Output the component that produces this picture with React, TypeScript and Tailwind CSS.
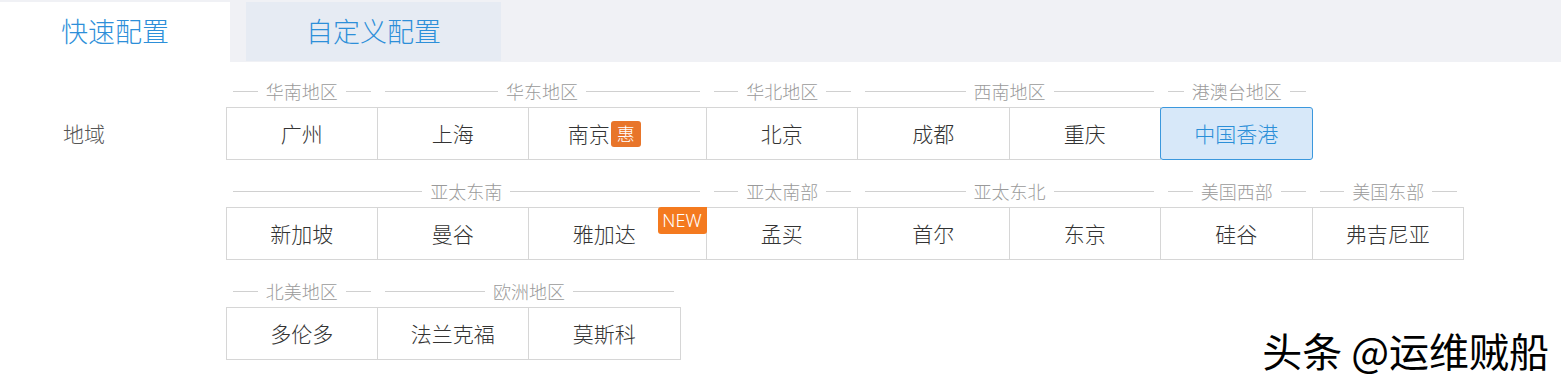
import React from "react";

type Btn = { name: string; w: number; badge?: "hui" | "new"; selected?: boolean };
type Group = { title: string; items: Btn[] };

const W = 151.5;

const rows: Group[][] = [
  [
    { title: "华南地区", items: [{ name: "广州", w: W - 1 }] },
    { title: "华东地区", items: [{ name: "上海", w: W }, { name: "南京", w: 177.5, badge: "hui" }] },
    { title: "华北地区", items: [{ name: "北京", w: W }] },
    { title: "西南地区", items: [{ name: "成都", w: W }, { name: "重庆", w: W }] },
    { title: "港澳台地区", items: [{ name: "中国香港", w: W, selected: true }] },
  ],
  [
    {
      title: "亚太东南",
      items: [
        { name: "新加坡", w: W - 1 },
        { name: "曼谷", w: W },
        { name: "雅加达", w: 177.5, badge: "new" },
      ],
    },
    { title: "亚太南部", items: [{ name: "孟买", w: W }] },
    { title: "亚太东北", items: [{ name: "首尔", w: W }, { name: "东京", w: W }] },
    { title: "美国西部", items: [{ name: "硅谷", w: W }] },
    { title: "美国东部", items: [{ name: "弗吉尼亚", w: W }] },
  ],
  [
    { title: "北美地区", items: [{ name: "多伦多", w: W - 1 }] },
    { title: "欧洲地区", items: [{ name: "法兰克福", w: W }, { name: "莫斯科", w: W }] },
  ],
];

const font = { fontFamily: '"Noto Sans CJK SC", "Noto Sans", sans-serif' };

function Button({ b, first }: { b: Btn; first: boolean }) {
  if (b.selected) {
    return (
      <div
        className="relative z-10 -ml-px flex h-[53px] items-center justify-center rounded-[3px] border border-[#3b98dd] bg-[#d7e8f9] text-[21px] font-light text-[#2b8fd8]"
        style={{ width: b.w + 1 }}
      >
        {b.name}
      </div>
    );
  }
  return (
    <div
      className={`relative flex h-[53px] items-center justify-center border-y border-r border-[#d6d6d6] text-[21px] font-light text-[#333] ${
        first ? "border-l" : ""
      } ${b.badge ? "pr-[26px]" : ""}`}
      style={{ width: b.w + (first ? 1 : 0) }}
    >
      <span className="flex items-center">
        {b.name}
        {b.badge === "hui" && (
          <span className="ml-[1px] flex h-[26px] w-[30px] items-center justify-center rounded-[3px] bg-[#e8752a] text-[18px] text-white">
            惠
          </span>
        )}
      </span>
      {b.badge === "new" && (
        <span
          className="absolute right-[-1px] top-[-1px] flex h-[27px] w-[49px] items-center justify-center rounded-b-[3px] rounded-tl-[3px] bg-[#f47a1f] text-[18px] text-white"
          style={{ fontFamily: '"Noto Sans", "Open Sans", sans-serif' }}
        >
          NEW
        </span>
      )}
    </div>
  );
}

function GroupView({ g, firstGroup }: { g: Group; firstGroup: boolean }) {
  return (
    <div className="flex flex-col">
      <div className="flex h-[32px] items-center gap-[8px] px-[7px]">
        <div className="h-px flex-1 bg-[#d0d0d0]" />
        <span className="text-[18px] font-light text-[#9a9a9a]">{g.title}</span>
        <div className="h-px flex-1 bg-[#d0d0d0]" />
      </div>
      <div className="flex">
        {g.items.map((b, i) => (
          <Button key={b.name} b={b} first={firstGroup && i === 0} />
        ))}
      </div>
    </div>
  );
}

export default function App() {
  return (
    <div className="relative h-[384px] w-[1561px] overflow-hidden bg-white" style={font}>
      <div className="flex h-[62px] bg-[#f0f1f5] pt-[2px]">
        <div className="flex h-[60px] w-[230px] items-center justify-center bg-white pb-[2px] text-[27px] font-light text-[#2d8fd9]">
          快速配置
        </div>
        <div className="ml-[16px] flex h-[59px] w-[255px] items-center justify-center bg-[#e6ebf3] text-[27px] font-light text-[#2d8fd9]">
          自定义配置
        </div>
      </div>
      <div className="flex pt-[13px]">
        <div className="w-[226px] pl-[63px] pt-[32px]">
          <div className="flex h-[53px] items-center text-[21px] font-light text-[#555]">地域</div>
        </div>
        <div className="flex flex-col gap-[15px]">
          {rows.map((row, ri) => (
            <div key={ri} className="flex">
              {row.map((g, gi) => (
                <GroupView key={g.title} g={g} firstGroup={gi === 0} />
              ))}
            </div>
          ))}
        </div>
      </div>
      <div
        className="absolute bottom-[10px] right-[12px] whitespace-nowrap text-[40px] leading-[48px] text-black"
        style={{ textShadow: "1px 1px 0 #fff, -1px -1px 0 #fff, 1px -1px 0 #fff, -1px 1px 0 #fff" }}
      >
        头条 @运维贼船
      </div>
    </div>
  );
}
